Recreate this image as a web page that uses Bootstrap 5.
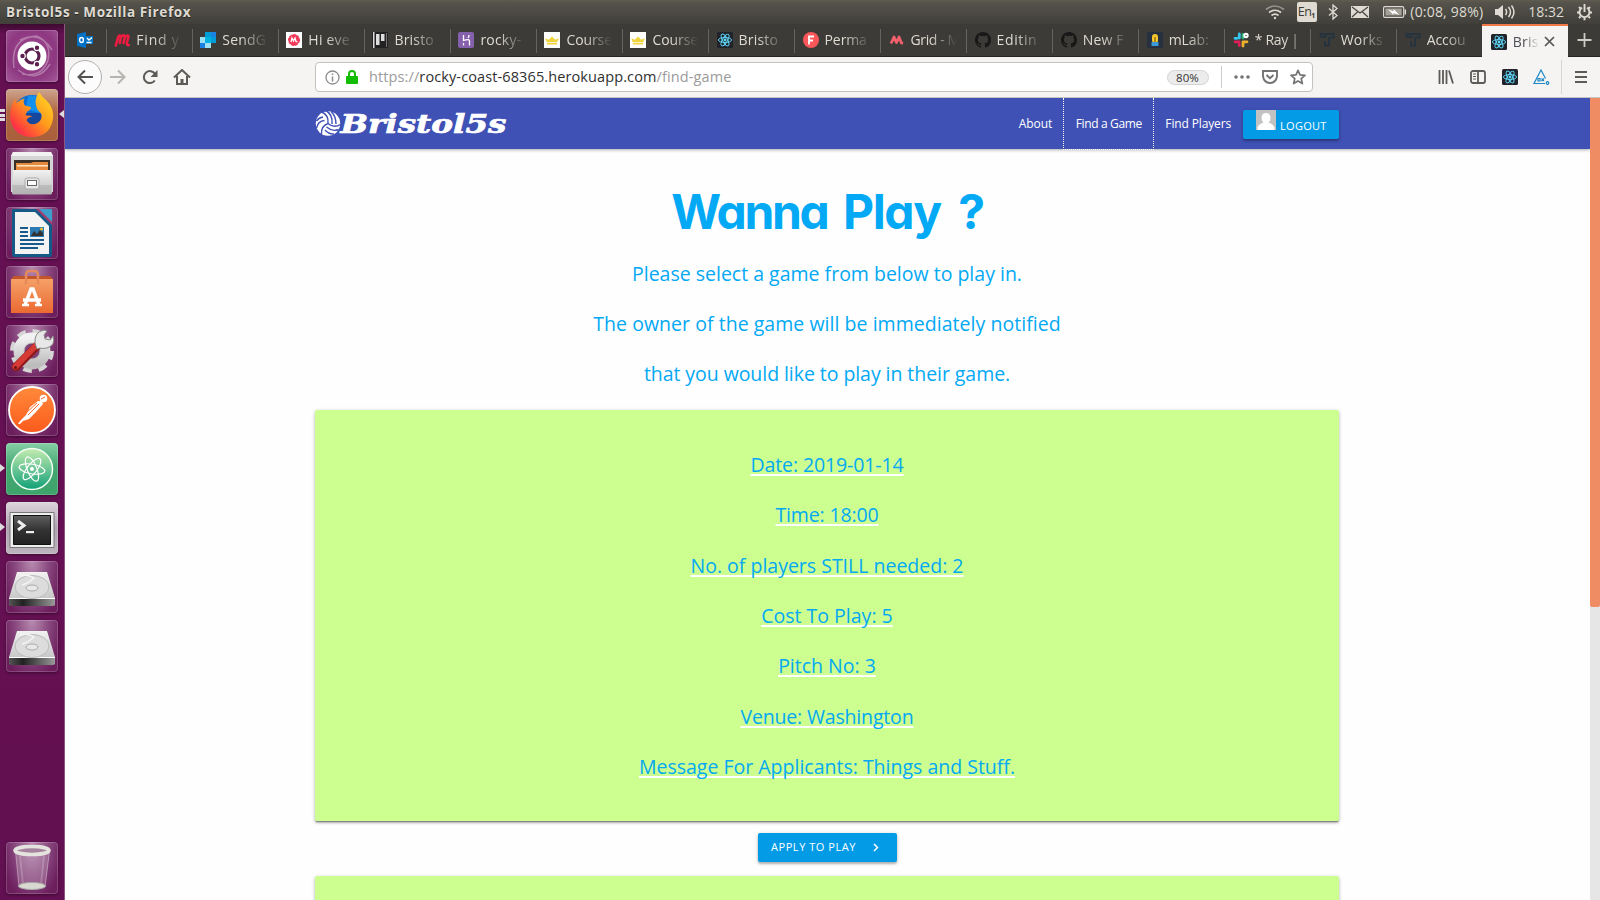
<!DOCTYPE html>
<html lang="en">
<head>
<meta charset="utf-8">
<title>Bristol5s</title>
<link href="https://cdn.jsdelivr.net/npm/bootstrap@5.3.0/dist/css/bootstrap.min.css" rel="stylesheet">
<style>
body{height:900px;overflow:hidden;font-family:"Open Sans","Noto Sans",sans-serif;background:#fefefe}
svg{display:block;flex:none}
/* desktop panel */
.panel{height:24px;background:linear-gradient(#5f5b50,#55534b 12%,#403f3a);color:#dfdbd2;font-size:14px;line-height:24px}
.panel-title{font-weight:700;font-size:13.5px;letter-spacing:.6px;padding-left:6px;text-shadow:0 1px 1px #0008}
.panel-icons{padding-right:7px}
.en-key{width:20px;height:20px;background:#dfdbd2;color:#3c3b37;border-radius:2px;font-size:12.5px;line-height:19px;padding-left:1px;white-space:nowrap;letter-spacing:-.6px}
.en-key sub{font-size:7px;font-weight:700;bottom:-.35em}
/* launcher */
.launcher{width:65px;background:linear-gradient(#3c0a30,#651053 10px,#651052 60%,#621051);border-right:1px solid #8d5580;padding:6px 0 6px 6px;gap:7px}
.tile{width:52px;height:52px;border-radius:4px;position:relative;background:radial-gradient(ellipse at 50% 0,#b78bb0,#8a4a80 45%,#6b1d5c 85%);box-shadow:inset 0 0 0 1px #ffffff2e,0 1px 3px #0006}
.tile.dash{background:radial-gradient(circle at 50% 45%,#a04b92,#8d3880 60%,#a55a9b)}
.tile.fox{background:linear-gradient(#cda48e,#b06640 45%,#a9603a)}
.tile.atom{background:linear-gradient(#86cfa6,#43a871 45%,#3da46b)}
.tile.term{background:linear-gradient(#dcd5dc,#aea3af 50%,#bdb4be)}
.pip{position:absolute;left:-6px;top:21px;width:0;height:0;border:4.5px solid transparent;border-left:5px solid #ddd;border-right:0}
.pip-r{position:absolute;right:-6px;top:21px;width:0;height:0;border:4px solid transparent;border-right:5px solid #ddd;border-left:0}
.bars{position:absolute;left:-6px;top:20px;width:5px;height:12px;background:repeating-linear-gradient(#ddd 0 3px,transparent 3px 4.5px)}
/* tabs */
.tabstrip{height:33px;background:#3c3b37;border-bottom:1px solid #252420;color:#dfdbd2;font-size:14px;line-height:34px}
.pin-tab{width:40.5px;padding-left:12px}
.tab-group{width:1376.5px}
.page-tab{flex:1 1 0;min-width:0;padding-left:8.8px;gap:6px;position:relative}
.page-tab::before{content:"";position:absolute;left:0;top:5px;height:24px;width:1px;background:#65645f}
.tab-text{width:47px;white-space:nowrap;letter-spacing:.2px;-webkit-mask-image:linear-gradient(90deg,#000 40%,transparent 98%);mask-image:linear-gradient(90deg,#000 40%,transparent 98%)}
.tight{letter-spacing:-.1px}
.roomy{letter-spacing:.8px}
.tab-on{width:85.5px;height:33px;background:#f5f4f2;border-top:2px solid #f07746;color:#4c4c55;padding-left:8.800px;gap:6px;line-height:32px}
.tab-on .tab-text{width:27px}
/* toolbar */
.toolbar{height:41px;background:#f5f4f2;border-bottom:1px solid #c5c3bf;position:relative}
.back-btn{width:34px;height:34px;border:1px solid #b1b0ae;border-radius:50%;background:#fcfcfc;margin-left:3px}
.address{position:absolute;left:250px;top:5px;width:998px;height:30px;border:1px solid #c4c2be;border-radius:4px;background:#fff;font-size:14.5px;line-height:30px;color:#9b9b9b;letter-spacing:.11px}
.zoom-pill{width:42px;height:15px;border:1px solid #d4d4d4;background:#ececec;border-radius:8px;font-size:11.5px;line-height:13px;color:#333}
/* page */
.site-nav{height:51px;background:#3f51b5;color:#fff;font-size:12px;padding:0 251px 0 250px;box-shadow:0 1px 3px #0005;position:relative}
.site-link{padding:0 11px;line-height:52px;height:51px;white-space:nowrap}
.site-link.on{height:52px;border:1px dotted #fff;border-top:0;padding:0 11.5px;letter-spacing:-.36px}
.mat-btn{height:29px;background:#039be5;color:#fff;border-radius:2px;box-shadow:0 2px 2px #0003,0 1px 4px #0003;font-size:11px}
.hero-title{font:700 48px/56px Inter,sans-serif;font-feature-settings:"cv11";letter-spacing:-1.400px;word-spacing:5.500px;padding:35px 0 8px 0;margin:0;color:#03a9f4}
.copy{font-size:19.5px;line-height:50.4px;color:#03a9f4;width:1024px}
.copy>div,.game>div{position:relative;top:.6px}
.game{width:1024px;height:411px;margin:11px auto 0 250px;background:#ccff90;border-radius:2px;padding-top:29px;box-shadow:0 2px 2px #00000038,0 1px 4px #00000030,0 2px 1px -1px #0004;font-size:19.5px;line-height:50.4px;color:#03a9f4}
.game u{text-decoration:underline 2px #fff;text-underline-offset:1.7px;text-decoration-skip-ink:none}
.rail{width:10px;background:#e6e6e6}
.thumb{height:509px;background:#f08c64;border-radius:0 0 2px 2px}
</style>
</head>
<body class="d-flex flex-column">
<svg width="0" height="0" class="position-absolute">
<defs>
<linearGradient id="metal" x2="0" y2="1"><stop stop-color="#f2f2f2"/><stop offset="1" stop-color="#bdbdbd"/></linearGradient>
<linearGradient id="dark" x2="1"><stop stop-color="#555"/><stop offset=".3" stop-color="#222"/><stop offset="1" stop-color="#999"/></linearGradient>
<linearGradient id="foxo" x1="1" y1="0" x2="0" y2="1"><stop stop-color="#ffe226"/><stop offset=".45" stop-color="#ff9a1c"/><stop offset=".8" stop-color="#ff3a3f"/><stop offset="1" stop-color="#e31587"/></linearGradient>
<linearGradient id="postm" x2="0" y2="1"><stop stop-color="#ff8a3c"/><stop offset="1" stop-color="#fc5a1c"/></linearGradient>
<linearGradient id="atomg" x2="0" y2="1"><stop stop-color="#c4ecb0"/><stop offset="1" stop-color="#12a078"/></linearGradient>
<linearGradient id="screen" x2="0" y2="1"><stop stop-color="#606060"/><stop offset=".5" stop-color="#333"/><stop offset="1" stop-color="#222"/></linearGradient>
<linearGradient id="orange" x2="0" y2="1"><stop stop-color="#f5a068"/><stop offset="1" stop-color="#ea6a32"/></linearGradient>
<symbol id="react" viewBox="0 0 16 16"><rect width="16" height="16" rx="1.5" fill="#20232a"/><g fill="none" stroke="#61dafb" stroke-width=".9"><ellipse cx="8" cy="8" rx="6.6" ry="2.5"/><ellipse cx="8" cy="8" rx="6.6" ry="2.5" transform="rotate(60 8 8)"/><ellipse cx="8" cy="8" rx="6.6" ry="2.5" transform="rotate(120 8 8)"/></g><circle cx="8" cy="8" r="1.4" fill="#61dafb"/></symbol>
<symbol id="crown" viewBox="0 0 16 16"><path fill="#fff" d="M0 0h16v16H0z"/><path fill="#f0d43c" d="M2.8 10.3 1.2 6.2l3.6 1.6L8 4.4l3.2 3.4 3.6-1.6-1.6 4.1zM3 11h10v1.6H3z"/></symbol>
<symbol id="github" viewBox="0 0 16 16"><path fill="#191717" d="M8 0C3.58 0 0 3.58 0 8c0 3.54 2.29 6.53 5.47 7.59.4.07.55-.17.55-.38 0-.19-.01-.82-.01-1.49-2.01.37-2.53-.49-2.69-.94-.09-.23-.48-.94-.82-1.13-.28-.15-.68-.52-.01-.53.63-.01 1.08.58 1.23.82.72 1.21 1.87.87 2.33.66.07-.52.28-.87.51-1.07-1.78-.2-3.64-.89-3.64-3.95 0-.87.31-1.59.82-2.15-.08-.2-.36-1.02.08-2.12 0 0 .67-.21 2.2.82a7.6 7.6 0 0 1 4 0c1.53-1.04 2.2-.82 2.2-.82.44 1.1.16 1.92.08 2.12.51.56.82 1.27.82 2.15 0 3.07-1.87 3.75-3.65 3.95.29.25.54.73.54 1.48 0 1.07-.01 1.93-.01 2.2 0 .21.15.46.55.38A8 8 0 0 0 16 8c0-4.42-3.58-8-8-8z"/></symbol>
<symbol id="travis" viewBox="0 0 16 16"><path d="M1.5 4.500V2H14.500V5.500H11M6.500 2V5H1.500M10 5V13.500H6V9" fill="none" stroke="#24333d" stroke-width="2"/></symbol>
<symbol id="disk" viewBox="0 0 52 52"><path d="M11 11h30l8 26v7H3v-7z" fill="url(#metal)"/><path d="M3 37.500h46V43q0 2-2 2H5q-2 0-2-2z" fill="url(#dark)"/><path d="M3 37.500h46" stroke="#fff"/><ellipse cx="26" cy="26" rx="17" ry="11.500" fill="#dcdcdc" stroke="#bbb"/><ellipse cx="26" cy="27" rx="6" ry="3" fill="#e8e8e8" stroke="#aaa"/><path d="M14 14q10 0 14 3-5 5-12 7" fill="none" stroke="#f5f5f5" stroke-width="1.500"/></symbol>
</defs>
</svg>

<header class="panel d-flex justify-content-between">
  <div class="panel-title">Bristol5s - Mozilla Firefox</div>
  <div class="panel-icons d-flex align-items-center">
    <svg width="20" height="16" viewBox="0 0 20 16" fill="none" stroke="#dfdbd2" stroke-width="1.700" style="margin-right:12px"><path d="M1 5.500Q10-1.500 19 5.500" stroke="#96938b"/><path d="M4 8.500q6-4.500 12 0M6.500 11.500q3.500-2.700 7 0"/><circle cx="10" cy="14" r="1.200" fill="#dfdbd2" stroke="none"/></svg>
    <div class="en-key" style="margin-right:11px">En<sub>1</sub></div>
    <svg width="10" height="16" viewBox="0 0 10 16" fill="none" stroke="#dfdbd2" stroke-width="1.300" style="margin-right:13.500px"><path d="M1 4.500l8 7L5 15V1l4 3.500-8 7"/></svg>
    <svg width="18" height="12" viewBox="0 0 18 12" style="margin-right:14px"><path fill="#dfdbd2" d="M0 0h18v12H0z"/><path d="M1 1l8 6 8-6M1 11l5.500-5M17 11l-5.500-5" fill="none" stroke="#44433e" stroke-width="1.200"/></svg>
    <svg width="24" height="12" viewBox="0 0 25 12" preserveAspectRatio="none" style="margin-right:3px"><rect x=".6" y=".6" width="21" height="10.800" rx="1.500" fill="none" stroke="#dfdbd2" stroke-width="1.200"/><path fill="#a3a098" d="M2.500 2.500h17v7h-17z"/><path fill="#dfdbd2" d="M22.500 3.500H24v5h-1.500z"/><path fill="#fff" d="M5 3l6 2.500V3l6 6-6-2v2z"/></svg>
    <span style="letter-spacing:.2px;margin-right:12px">(0:08, 98%)</span>
    <svg width="20" height="16" viewBox="0 0 20 16" style="margin-right:13px"><path fill="#dfdbd2" d="M0 5h3l5-4v14l-5-4H0z"/><path d="M10.500 5q2.200 3 0 6M13.500 3q4 5 0 10M16.500 1.500q5 6.500 0 13" fill="none" stroke="#dfdbd2" stroke-width="1.500"/></svg>
    <span style="margin-right:12px">18:32</span>
    <svg width="17" height="17" viewBox="0 0 17 17" fill="none" stroke="#dfdbd2"><path d="M6 3.800a5 5 0 1 0 5 0" stroke-width="1.900"/><path d="M8.500 0v8" stroke-width="1.900"/><path d="M8.500 13.500v2.800M1 8.500h2.500M13.500 8.500H16M3 3l1.500 1.500M14 3l-1.500 1.500M3 14l1.500-1.500M14 14l-1.500-1.500" stroke-width="2"/></svg>
  </div>
</header>

<div class="d-flex flex-grow-1" style="min-height:0">
  <nav class="launcher d-flex flex-column flex-shrink-0">
    <div class="tile dash"><svg width="52" height="52" viewBox="0 0 52 52"><path d="M8 38Q4 8 30 6q16 6 12 24Q36 48 16 44M14 10Q34 0 46 20M44 34Q32 54 12 40" fill="none" stroke="#ffffff50" stroke-width="1.500"/><circle cx="26" cy="26" r="14.500" fill="#fff"/><circle cx="26" cy="26" r="7" fill="none" stroke="#5c2050" stroke-width="3.200"/><g fill="#5c2050" stroke="#fff" stroke-width="1.200"><circle cx="16.500" cy="26" r="2.800"/><circle cx="31" cy="17.800" r="2.800"/><circle cx="31" cy="34.200" r="2.800"/></g></svg></div>
    <div class="tile fox"><i class="bars"></i><i class="pip-r"></i><svg width="52" height="52" viewBox="0 0 52 52"><circle cx="26" cy="25" r="19" fill="#0c6fd8"/><path d="M22 7q8-2 14 5l-2 12-14-4z" fill="#1390ee"/><path d="M18 24h16l3 6-8 8H18z" fill="#15479c"/><path d="M33 3q3 5 7 8 8.500 8 7 19-3 17-20 18Q8 48 4.500 31 3 19 9 10l1.500 4q4-4 8-4.500-2 4 .5 7l6 1.500q0 3-4 4.500l-1.500 4q5-.5 7 1-4 0-6 3.500 3 6 10 3.500 6-3 5-9.500-6-5-6-12 .5-6 3.500-10z" fill="url(#foxo)"/></svg></div>
    <div class="tile"><svg width="52" height="52" viewBox="0 0 52 52"><path fill="#d4d4d4" d="M5 8l2-4h38l2 4v36H5z"/><path fill="#f1f1f1" d="M5 8l2-4h38l2 4z"/><path fill="#3a3027" d="M8 12h36v14H8z"/><path fill="#e58a3c" d="M10 15h15l2-1h15v10H10z"/><path fill="#ffe6c0" d="M11 17h31v1.500H11z"/><path fill="url(#metal)" d="M7 22h38l1 24H6z"/><path fill="#aaa" d="M6 37h40l-1 10H7z" opacity=".5"/><rect x="19" y="30" width="14" height="11" rx="2" fill="#e8e8e8" stroke="#aaa"/><rect x="21.500" y="32.500" width="9" height="5" fill="#fff" stroke="#666"/></svg></div>
    <div class="tile"><svg width="52" height="52" viewBox="0 0 52 52"><path fill="#155a86" d="M6 3q0-1 1-1h26l13 13v33q0 2-2 2H8q-2 0-2-2z"/><path fill="#f3f3f3" d="M9 5h20l14 14v28H9z"/><path fill="#3d9ecb" d="M31 2h15v15z"/><path fill="#a93a70" d="M30 2h3l13 13v3z"/><path d="M14 21h8M14 25h8M14 29h8M14 33h24M14 37h24M14 41h18" stroke="#175a8b" stroke-width="2"/><path fill="#2d7ab2" d="M24 20h14v10H24z"/><path fill="#333" d="M25 29l3-5 3 3 3-4 3 3v3z"/><circle cx="35.500" cy="22" r="1.500" fill="#eec02d"/></svg></div>
    <div class="tile"><svg width="52" height="52" viewBox="0 0 52 52"><path fill="#c2552a" d="M5 13l3-3h36l3 3z"/><path fill="url(#orange)" d="M5 13h42v34H5z"/><path d="M20 18V9q0-4 4-4h4q4 0 4 4v9" fill="none" stroke="#e58a5c" stroke-width="2.500"/><path d="M19 39l6-16h2l6 16M17 34h18" fill="none" stroke="#fff" stroke-width="3.500"/><path d="M16 39h7M29 39h7" stroke="#fff" stroke-width="2.500"/></svg></div>
    <div class="tile"><svg width="52" height="52" viewBox="0 0 52 52"><circle cx="26" cy="26" r="19" fill="none" stroke="#d5d5d5" stroke-width="6" stroke-dasharray="8.300 6.620"/><circle cx="26" cy="26" r="13" fill="none" stroke="url(#metal)" stroke-width="11"/><circle cx="26" cy="26" r="8" fill="#804276" stroke="#bbb"/><path d="M10 42L31 21" stroke="#8f1818" stroke-width="8.500" stroke-linecap="round"/><path d="M9.500 41.500L30 20.500" stroke="#d63a34" stroke-width="6" stroke-linecap="round"/><path d="M29 18q-1-11 9-13l3 1-3 4 1 4 5 1 3-4q3 9-6 12-5 1-7 0l-3 1z" fill="#e8e8e8" stroke="#888"/><circle cx="9.500" cy="42.500" r="1.500" fill="#6b1212"/></svg></div>
    <div class="tile"><svg width="52" height="52" viewBox="0 0 52 52"><circle cx="26" cy="26" r="23" fill="url(#postm)" stroke="#fff" stroke-width="1.800"/><path d="M12 40l2-3 6-6 4-8 8-6h4l1 3-7 8-7 7-6 2-3 3z" fill="#fff"/><path d="M20 29l11-10M22 31l11-11" stroke="#fc6a2c" stroke-width="1"/><circle cx="37.500" cy="14.500" r="3.800" fill="#fff"/><path d="M35 15l4-2" stroke="#fc6a2c"/></svg></div>
    <div class="tile atom"><i class="pip"></i><svg width="52" height="52" viewBox="0 0 52 52"><circle cx="26" cy="26" r="20.500" fill="url(#atomg)" stroke="#f4fff4" stroke-width="1.500"/><g fill="none" stroke="#fff" stroke-width="1.200"><ellipse cx="26" cy="26" rx="13" ry="4.800" transform="rotate(10 26 26)"/><ellipse cx="26" cy="26" rx="13" ry="4.800" transform="rotate(68 26 26)"/><ellipse cx="26" cy="26" rx="13" ry="4.800" transform="rotate(128 26 26)"/></g><circle cx="26" cy="26" r="2" fill="#fff"/></svg></div>
    <div class="tile term"><i class="pip"></i><svg width="52" height="52" viewBox="0 0 52 52"><path fill="#eee" stroke="#777" d="M4 10.500h44v35H4z"/><path fill="url(#screen)" stroke="#111" d="M7.500 13.500h37v29h-37z"/><path d="M12 19l6 4.500-6 4.500" fill="none" stroke="#eee" stroke-width="3"/><path fill="#eee" d="M20 29h8v2.200h-8z"/></svg></div>
    <div class="tile"><svg width="52" height="52"><use href="#disk"/></svg></div>
    <div class="tile"><svg width="52" height="52"><use href="#disk"/></svg></div>
    <div class="tile mt-auto"><svg width="52" height="52" viewBox="0 0 52 52"><path fill="#ffffff30" stroke="#ffffff60" d="M9.500 9h34L39 45H13z"/><path d="M14 14l3 28M38 14l-3 28" stroke="#ffffff30" stroke-width="2"/><ellipse cx="26" cy="44" rx="13.500" ry="3.500" fill="#d8d8d0" stroke="#aaa"/><ellipse cx="26" cy="8.500" rx="17" ry="4" fill="#a583a0" stroke="#e5e3de" stroke-width="3.500"/></svg></div>
  </nav>

  <div class="d-flex flex-column flex-grow-1" style="min-width:0">
    <div class="tabstrip d-flex flex-shrink-0">
      <div class="pin-tab d-flex align-items-center"><svg width="16" height="16" viewBox="0 0 16 16"><path fill="#0072c6" d="M0 2l9-2v16l-9-2z"/><path fill="#0072c6" d="M8 4h8v8H8z"/><path fill="none" stroke="#fff" stroke-width="1.400" d="M10 6l2 2 3-2.500M9.500 10.500h5"/><ellipse cx="4.500" cy="8" rx="1.900" ry="2.500" fill="none" stroke="#fff" stroke-width="1.400"/></svg></div>
      <div class="tab-group d-flex">
        <div class="page-tab d-flex align-items-center"><svg width="16" height="16" viewBox="0 0 16 16"><path d="M1.800 13.500L4 5.500Q5 2.500 7 4L5.800 11M7 5q3-3 4-.5L9.500 11M11 5q3.500-3 3.500 0L12.800 11q0 2.500 2 2" fill="none" stroke="#ed1c40" stroke-width="2.600" stroke-linecap="round" stroke-linejoin="round"/></svg><span class="tab-text roomy">Find y</span></div>
        <div class="page-tab d-flex align-items-center"><svg width="16" height="16"><path fill="#009dd9" d="M5 0h11v11H5z"/><path fill="#99e1f4" d="M0 5h5v11H0z"/><path fill="#1a82e2" d="M0 11h5v5H0zM11 0h5v5h-5z"/><path fill="#00b2e3" d="M5 5h6v6H5z"/><path fill="#9de1f3" d="M5 11h6v5H5z"/><path fill="#3c3b37" d="M0 0h5v5H0zM11 11h5v5h-5z"/></svg><span class="tab-text">SendG</span></div>
        <div class="page-tab d-flex align-items-center"><svg width="16" height="16"><path fill="#fff" d="M0 0h16v16H0z"/><circle cx="8" cy="8" r="5.500" fill="#f13959" stroke="#f13959" stroke-dasharray="3 1"/><path d="M5 10l1-4 1.500 3L9 6l1 3.500 1.500.5" fill="none" stroke="#fff" stroke-width="1.300"/></svg><span class="tab-text">Hi eve</span></div>
        <div class="page-tab d-flex align-items-center"><svg width="16" height="16"><path fill="#222" d="M0 0h16v16H0z"/><path fill="#ddd" d="M1 0h1.500v16H1zM4 2h3.500v11H4zM9 2h3.500v7H9z"/><path fill="#777" d="M14 1h1v14h-1z"/></svg><span class="tab-text">Bristo</span></div>
        <div class="page-tab d-flex align-items-center"><svg width="16" height="16"><rect width="16" height="16" rx="2" fill="#8560ad"/><path d="M5.500 3v5.500q6-2 6 .5v4.500M11 3q0 2-1 3M5.500 11v2.500" fill="none" stroke="#fff" stroke-width="1.300"/></svg><span class="tab-text">rocky-</span></div>
        <div class="page-tab d-flex align-items-center"><svg width="16" height="16"><use href="#crown"/></svg><span class="tab-text tight">Course</span></div>
        <div class="page-tab d-flex align-items-center"><svg width="16" height="16"><use href="#crown"/></svg><span class="tab-text tight">Course</span></div>
        <div class="page-tab d-flex align-items-center"><svg width="16" height="16"><use href="#react"/></svg><span class="tab-text">Bristo</span></div>
        <div class="page-tab d-flex align-items-center"><svg width="16" height="16"><circle cx="8" cy="8" r="8" fill="#f9575a"/><path d="M6 12.500V4.500h5M6 8.500h4" fill="none" stroke="#fff" stroke-width="1.800"/></svg><span class="tab-text tight">Perma</span></div>
        <div class="page-tab d-flex align-items-center"><svg width="16" height="16"><path d="M2 11.500L5 5l2.500 5.500L10 5l2.500 6 1.500.5" fill="none" stroke="#f2606c" stroke-width="2.800" stroke-linejoin="round"/></svg><span class="tab-text" style="letter-spacing:-.4px">Grid - M</span></div>
        <div class="page-tab d-flex align-items-center"><svg width="16" height="16"><use href="#github"/></svg><span class="tab-text" style="letter-spacing:.6px">Editin</span></div>
        <div class="page-tab d-flex align-items-center"><svg width="16" height="16"><use href="#github"/></svg><span class="tab-text">New F</span></div>
        <div class="page-tab d-flex align-items-center"><svg width="16" height="16"><path fill="#26303f" d="M0 0h16v16H0z"/><rect x="5" y="2" width="6" height="9" rx="3" fill="#f7c52c"/><path fill="#3e9ad6" d="M4.500 10h7v4h-7z"/><path d="M8 5v5" stroke="#6b4d00"/></svg><span class="tab-text tight">mLab:</span></div>
        <div class="page-tab d-flex align-items-center"><svg width="16" height="16" fill="none" stroke-width="2.800" stroke-linecap="round"><path d="M6.300 2v4M2 6.300h2" stroke="#36c5f0"/><path d="M10 2.500v3.500" stroke="#2eb67d"/><path d="M2 9.800h4.200M6.300 13.500v-1" stroke="#e01e5a"/><path d="M10 10v4M10 9.800h4" stroke="#ecb22e"/><circle cx="13" cy="3.500" r="1.700" stroke="#fff" stroke-width="2"/></svg><span class="tab-text" style="letter-spacing:-.3px;-webkit-mask-image:linear-gradient(90deg,#000 60%,#0008);mask-image:linear-gradient(90deg,#000 60%,#0006)">* Ray |</span></div>
        <div class="page-tab d-flex align-items-center"><svg width="16" height="16"><use href="#travis"/></svg><span class="tab-text">Works</span></div>
        <div class="page-tab d-flex align-items-center"><svg width="16" height="16"><use href="#travis"/></svg><span class="tab-text tight">Accou</span></div>
      </div>
      <div class="tab-on d-flex align-items-center"><svg width="16" height="16"><use href="#react"/></svg><span class="tab-text">Bris</span><svg width="11" height="11" style="margin-left:-2px"><path d="M1 1l9 9M10 1l-9 9" stroke="#555" stroke-width="1.700"/></svg></div>
      <svg width="32" height="32"><path d="M16.500 9v14M9.500 16h14" stroke="#cfccc5" stroke-width="1.800"/></svg>
    </div>

    <div class="toolbar d-flex align-items-center flex-shrink-0">
      <div class="back-btn d-flex align-items-center justify-content-center"><svg width="16" height="16" fill="none" stroke="#54534f" stroke-width="2"><path d="M16 8H2M8 1.500L1.500 8 8 14.500"/></svg></div>
      <svg width="16" height="16" fill="none" stroke="#b5b4b1" stroke-width="2" style="margin-left:8px"><path d="M0 8h14M8 1.500L14.500 8 8 14.500"/></svg>
      <svg width="16" height="16" fill="none" stroke="#5c5b57" stroke-width="2" style="margin-left:16px"><path d="M12.800 11.500A6 6 0 1 1 13 5"/><path fill="#5c5b57" stroke="none" d="M15.500 1v7h-7z"/></svg>
      <svg width="18" height="16" viewBox="0 0 18 16" fill="none" stroke="#5c5b57" stroke-width="2" style="margin-left:15px"><path d="M1 8.500L9 1l8 7.500M4 7v8h10V7"/><path d="M9 15v-5" stroke-width="3"/></svg>
      <div class="address d-flex align-items-center">
        <svg width="15" height="15" style="margin-left:8.500px"><circle cx="7.500" cy="7.500" r="6.500" fill="none" stroke="#8b8b8b" stroke-width="1.300"/><path d="M7.500 6.500v5M7.500 3.500v1.600" stroke="#8b8b8b" stroke-width="1.500"/></svg>
        <svg width="12" height="14" style="margin-left:6px"><path d="M3 6V4q0-3 3-3t3 3v2" fill="none" stroke="#12bc00" stroke-width="2"/><rect y="6" width="12" height="8" rx="1" fill="#12bc00"/></svg>
        <span style="margin-left:11.500px">https://<span style="color:#303030">rocky-coast-68365.herokuapp.com</span>/find-game</span>
        <div class="zoom-pill ms-auto text-center">80%</div>
        <div style="width:1px;height:22px;background:#ccc;margin:0 12.500px 0 12px"></div>
        <svg width="16" height="4" fill="#737373"><circle cx="2" cy="2" r="1.800"/><circle cx="8" cy="2" r="1.800"/><circle cx="14" cy="2" r="1.800"/></svg>
        <svg width="16" height="14" fill="none" stroke="#737373" stroke-width="1.900" style="margin-left:12px"><path d="M1 1h14v5.500q-1 6-7 6.500-6-.5-7-6.500zM4.500 5L8 8.300 11.500 5"/></svg>
        <svg width="16" height="16" fill="none" stroke="#737373" stroke-width="1.700" style="margin:0 6px 0 12px"><path stroke-linejoin="round" d="M8 1.300l2 4.600 5 .4-3.800 3.300 1.200 5L8 12l-4.400 2.600 1.200-5L1 6.300l5-.4z"/></svg>
      </div>
      <div class="ms-auto d-flex align-items-center" style="padding-right:13px">
        <svg width="16" height="14" stroke="#5c5b57" stroke-width="1.800"><path d="M1.500 0v14M5 0v14M8.500 0v14M11 .5L15 13.500"/></svg>
        <svg width="16" height="14" fill="none" stroke="#5c5b57" stroke-width="1.800" style="margin-left:16px"><rect x="1" y="1" width="14" height="12" rx="2"/><path d="M8 1v12"/><path d="M3 4h3M3 6.500h3M3 9h3" stroke-width="1"/></svg>
        <svg width="16" height="16" style="margin-left:16px"><use href="#react"/></svg>
        <svg width="17" height="16" fill="none" stroke="#1e88c9" stroke-width="1.200" style="margin-left:15px"><path d="M12 14.500H1L8 1l4.500 8.500"/><circle cx="14.500" cy="14" r="1.300"/><path d="M5 9.500v2.500h2V9.500zM8.500 9.500l2.500 2.500M11 9.500L8.500 12"/></svg>
        <div style="width:1px;height:34px;background:#d6d5d2;margin:0 13px 0 11px"></div>
        <svg width="12" height="12" stroke="#5c5b57" stroke-width="2"><path d="M0 1h12M0 6h12M0 11h12"/></svg>
      </div>
    </div>

    <div class="d-flex flex-grow-1" style="min-height:0">
      <main class="flex-grow-1 overflow-hidden text-center">
        <nav class="site-nav d-flex">
          <svg width="200" height="51" viewBox="0 0 200 51"><circle cx="13" cy="25.500" r="12.200" fill="#fff"/><g fill="none" stroke="#3f51b5" stroke-width="1.400"><path d="M13 25.500Q14 17 6 13.500M13 25.500q6 5 12.500 1M13 25.500Q6 28 6.500 36M17 26Q18 16 10.500 12.500M21 26q0-8-5-12.500M9.500 22.500Q3 23 1.500 30M10.500 27.500M8 19q-4 .5-6.500 4M11.500 29q6 5 12 2.500M10 32q4 4.500 9 4"/></g><text x="25.500" y="34.500" textLength="166" lengthAdjust="spacingAndGlyphs" fill="#fff" stroke="#fff" stroke-width=".7" font-family="DejaVu Serif, serif" font-style="italic" font-weight="700" font-size="26">Bristol5s</text></svg>
          <div class="ms-auto d-flex">
            <span class="site-link" style="letter-spacing:-.05px">About</span>
            <span class="site-link on">Find a Game</span>
            <span class="site-link" style="letter-spacing:-.14px;padding-right:12px">Find Players</span>
            <div class="mat-btn d-flex" style="width:96px;margin-top:12px;padding-left:13px"><svg width="20" height="20"><path fill="#c2c2c2" d="M0 0h20v20H0z"/><path fill="#fff" d="M10 3q4.500 0 4.500 5 0 3-2 4.500 5 1.500 6 5V20h-17v-2.500q1-3.500 6-5-2-1.500-2-4.500 0-5 4.500-5z"/></svg><span style="line-height:32px;margin-left:4px;letter-spacing:.3px">LOGOUT</span></div>
          </div>
        </nav>
        <h1 class="hero-title"><span style="letter-spacing:-2.300px">Wanna</span> Play <span style="margin-left:2px">?</span></h1>
        <div class="copy" style="margin-left:250px">
          <div>Please select a game from below to play in.</div>
          <div style="letter-spacing:.04px">The owner of the game will be immediately notified</div>
          <div style="letter-spacing:-.06px">that you would like to play in their game.</div>
        </div>
        <section class="game">
          <div style="letter-spacing:-.11px"><u>Date: 2019-01-14</u></div>
          <div style="letter-spacing:-.14px"><u>Time: 18:00</u></div>
          <div><u>No. of players STILL needed: 2</u></div>
          <div><u>Cost To Play: 5</u></div>
          <div><u>Pitch No: 3</u></div>
          <div style="letter-spacing:-.17px"><u>Venue: Washington</u></div>
          <div><u>Message For Applicants: Things and Stuff.</u></div>
        </section>
        <div class="mat-btn d-flex align-items-center" style="width:139px;margin:12px 0 0 693px;padding-left:13px"><span style="letter-spacing:.55px">APPLY TO PLAY</span><svg width="6" height="9" style="margin-left:17px"><path d="M1 1l3.500 3.500L1 8" fill="none" stroke="#fff" stroke-width="1.500"/></svg></div>
        <section class="game" style="margin-top:14px"></section>
      </main>
      <div class="rail flex-shrink-0"><div class="thumb"></div></div>
    </div>
  </div>
</div>
<script src="https://cdn.jsdelivr.net/npm/bootstrap@5.3.0/dist/js/bootstrap.bundle.min.js"></script>
</body>
</html>
